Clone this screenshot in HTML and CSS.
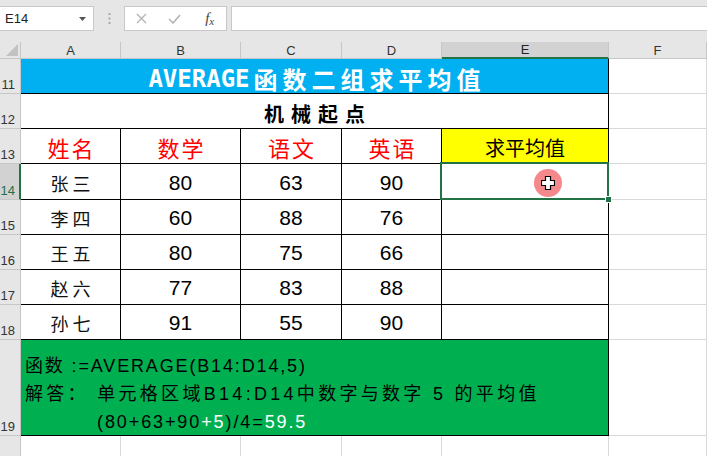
FILE: index.html
```html
<!DOCTYPE html>
<html lang="zh-CN">
<head>
<meta charset="utf-8">
<title>AVERAGE</title>
<link rel="stylesheet" href="styles.css">
</head>
<body>
<div class="toolbar">
  <div class="namebox"><span>E14</span>
    <svg class="caret" width="7" height="4" viewBox="0 0 7 4"><path d="M0 0h7L3.5 4z" fill="#555"/></svg>
  </div>
  <div class="grip">
    <svg width="3" height="11" viewBox="0 0 3 11"><rect x="0.5" y="0" width="2" height="2" fill="#a8a8a8"/><rect x="0.5" y="4.5" width="2" height="2" fill="#a8a8a8"/><rect x="0.5" y="9" width="2" height="2" fill="#a8a8a8"/></svg>
  </div>
  <div class="fbox">
    <span class="fbtn"><svg width="11" height="11" viewBox="0 0 11 11"><path d="M1 1l9 9M10 1l-9 9" stroke="#b4b4b4" stroke-width="1.4" fill="none"/></svg></span>
    <span class="fbtn"><svg width="13" height="10" viewBox="0 0 13 10"><path d="M1 5l4 4 7-8" stroke="#b4b4b4" stroke-width="1.6" fill="none"/></svg></span>
    <span class="fbtn fx">f<span class="fxsub">x</span></span>
  </div>
  <div class="finput"></div>
</div>

<div class="sheet">
  <div class="corner"><svg width="12" height="12" viewBox="0 0 12 12"><path d="M12 0v12H0z" fill="#c2c2c2"/></svg></div>
  <div class="colh">A</div>
  <div class="colh">B</div>
  <div class="colh">C</div>
  <div class="colh">D</div>
  <div class="colh colh-sel">E</div>
  <div class="colh">F</div>

  <div class="rowh">11</div>
  <div class="title"><span class="title-lat">AVERAGE</span><span class="title-cjk">函数二组求平均值</span></div>
  <div class="cell"></div>

  <div class="rowh">12</div>
  <div class="subtitle">机械起点</div>
  <div class="cell"></div>

  <div class="rowh">13</div>
  <div class="t head">姓名</div>
  <div class="t head">数学</div>
  <div class="t head">语文</div>
  <div class="t head">英语</div>
  <div class="t head-avg">求平均值</div>
  <div class="cell"></div>

  <div class="rowh rowh-sel">14</div>
  <div class="t name">张三</div>
  <div class="t num">80</div>
  <div class="t num">63</div>
  <div class="t num">90</div>
  <div class="t sel"><span class="handle"></span><span class="cursor"><svg width="14" height="14" viewBox="0 0 14 14"><path d="M4.5 0.5h5v4h4v5h-4v4h-5v-4h-4v-5h4z" fill="#fff" stroke="#000" stroke-width="1.2"/></svg></span></div>
  <div class="cell"></div>

  <div class="rowh">15</div>
  <div class="t name">李四</div>
  <div class="t num">60</div>
  <div class="t num">88</div>
  <div class="t num">76</div>
  <div class="t"></div>
  <div class="cell"></div>

  <div class="rowh">16</div>
  <div class="t name">王五</div>
  <div class="t num">80</div>
  <div class="t num">75</div>
  <div class="t num">66</div>
  <div class="t"></div>
  <div class="cell"></div>

  <div class="rowh">17</div>
  <div class="t name">赵六</div>
  <div class="t num">77</div>
  <div class="t num">83</div>
  <div class="t num">88</div>
  <div class="t"></div>
  <div class="cell"></div>

  <div class="rowh">18</div>
  <div class="t name">孙七</div>
  <div class="t num">91</div>
  <div class="t num">55</div>
  <div class="t num">90</div>
  <div class="t"></div>
  <div class="cell"></div>

  <div class="rowh">19</div>
  <div class="note">
    <div class="note-line l1">函数 :=AVERAGE(B14:D14,5)</div>
    <div class="note-line l2">解答： 单元格区域B14:D14中数字与数字 5 的平均值</div>
    <div class="note-line l3">(80+63+90<span class="hl">+5</span>)/4=<span class="hl">59.5</span></div>
  </div>
  <div class="cell"></div>

  <div class="rowh"></div>
  <div class="cell"></div>
  <div class="cell"></div>
  <div class="cell"></div>
  <div class="cell"></div>
  <div class="cell"></div>
  <div class="cell"></div>
</div>
</body>
</html>
```

FILE: styles.css
```css
html, body {
  margin: 0;
  padding: 0;
}
body {
  width: 707px;
  height: 456px;
  overflow: hidden;
  background: #fff;
  font-family: "Liberation Sans", "Noto Sans CJK SC", sans-serif;
}

/* ---------- formula bar ---------- */
.toolbar {
  height: 42px;
  box-sizing: border-box;
  background: #e6e6e6;
  display: flex;
  align-items: flex-start;
  padding-top: 6px;
}
.namebox {
  width: 94px;
  height: 25px;
  box-sizing: border-box;
  background: #fff;
  border: 1px solid #c8c8c8;
  border-left: none;
  display: flex;
  align-items: center;
  justify-content: space-between;
  padding: 0 7px 0 5px;
  font-size: 13px;
  color: #222;
}
.grip {
  width: 30px;
  height: 25px;
  display: flex;
  align-items: center;
  justify-content: center;
}
.fbox {
  width: 103px;
  height: 25px;
  box-sizing: border-box;
  background: #fff;
  border: 1px solid #c8c8c8;
  display: flex;
  align-items: center;
}
.fbtn {
  width: 34px;
  display: flex;
  justify-content: center;
  align-items: center;
}
.fx {
  font-family: "Liberation Serif", serif;
  font-style: italic;
  font-size: 15px;
  color: #444;
  padding-left: 3px;
}
.fxsub {
  font-size: 11px;
  position: relative;
  top: 2px;
}
.finput {
  flex: 1;
  height: 25px;
  margin-left: 4px;
  box-sizing: border-box;
  background: #fff;
  border: 1px solid #c8c8c8;
  border-right: none;
}

/* ---------- sheet ---------- */
.sheet {
  display: grid;
  grid-template-columns: 21px 100px 120px 101px 100px 167px 98px;
  grid-template-rows: 17px 35px 35px 35px 36px 35px 35px 35px 35px 96px 35px;
}
.sheet > div {
  box-sizing: border-box;
  min-width: 0;
}
.corner {
  background: #e6e6e6;
  border-right: 1px solid #c6c6c6;
  border-bottom: 1px solid #c6c6c6;
  display: flex;
  align-items: flex-end;
  justify-content: flex-end;
  padding: 0 2px 2px 0;
}
.colh {
  background: #e6e6e6;
  border-right: 1px solid #c6c6c6;
  border-bottom: 1px solid #c6c6c6;
  font-size: 13px;
  color: #333;
  display: flex;
  align-items: center;
  justify-content: center;
}
.colh-sel {
  background: #d2d2d2;
  border-bottom: 2px solid #217346;
  color: #222;
}
.rowh {
  background: #e6e6e6;
  border-right: 1px solid #c6c6c6;
  border-bottom: 1px solid #c6c6c6;
  font-size: 13px;
  color: #333;
  display: flex;
  align-items: flex-end;
  justify-content: flex-end;
  padding: 0 5px 1px 0;
  white-space: nowrap;
}
.rowh-sel {
  background: #d2d2d2;
  border-right: 2px solid #217346;
  color: #217346;
  padding-right: 4px;
}
.cell {
  border-right: 1px solid #d9d9d9;
  border-bottom: 1px solid #d9d9d9;
}

.title {
  grid-column: span 5;
  background: #00b0f0;
  border-right: 1px solid #000;
  border-bottom: 1px solid #000;
  color: #fff;
  display: flex;
  align-items: center;
  justify-content: center;
  padding-top: 5px;
  font-weight: bold;
  white-space: nowrap;
}
.title-lat {
  font-family: "DejaVu Sans Mono", monospace;
  font-size: 24px;
}
.title-cjk {
  font-family: "Noto Sans CJK SC", sans-serif;
  font-size: 24px;
  letter-spacing: 5px;
  margin-left: 4px;
  margin-right: -5px;
}
.subtitle {
  grid-column: span 5;
  border-right: 1px solid #000;
  border-bottom: 1px solid #000;
  font-family: "Noto Sans CJK SC", sans-serif;
  font-weight: bold;
  font-size: 20px;
  letter-spacing: 7px;
  padding-left: 7px;
  display: flex;
  align-items: center;
  justify-content: center;
  padding-top: 4px;
  color: #000;
}

.t {
  border-right: 1px solid #000;
  border-bottom: 1px solid #000;
  display: flex;
  align-items: center;
  justify-content: center;
}
.head {
  color: #ff0000;
  font-family: "Noto Sans CJK SC", sans-serif;
  font-size: 22px;
  letter-spacing: 2px;
  padding-left: 2px;
  padding-top: 2px;
}
.head-avg {
  background: #ffff00;
  border-right: 1px solid #000;
  border-bottom: 1px solid #000;
  font-family: "Noto Sans CJK SC", sans-serif;
  font-size: 20px;
  color: #000;
  display: flex;
  align-items: center;
  justify-content: center;
  padding-top: 2px;
}
.name {
  font-family: "Noto Sans CJK SC", sans-serif;
  font-size: 18px;
  letter-spacing: 4px;
  padding-left: 4px;
  padding-top: 2px;
  color: #111;
}
.num {
  font-family: "Liberation Sans", sans-serif;
  font-size: 21px;
  color: #000;
  padding-top: 2px;
}

.sel {
  position: relative;
}
.sel::before {
  content: "";
  position: absolute;
  left: -2px;
  top: -2px;
  right: -1px;
  bottom: -1px;
  border: 2px solid #217346;
}
.handle {
  position: absolute;
  right: -4px;
  bottom: -4px;
  width: 5px;
  height: 5px;
  background: #217346;
  border: 1px solid #fff;
}
.cursor {
  position: absolute;
  left: 92px;
  top: 5px;
  width: 28px;
  height: 28px;
  border-radius: 50%;
  background: #f4888b;
  display: flex;
  align-items: center;
  justify-content: center;
}

.note {
  grid-column: span 5;
  background: #00b050;
  border-right: 1px solid #000;
  border-bottom: 1px solid #000;
  display: flex;
  flex-direction: column;
  justify-content: flex-start;
  padding: 12px 0 0 4px;
  font-size: 18px;
  line-height: 28px;
  color: #000;
  white-space: nowrap;
}
.l1 {
  letter-spacing: 1.85px;
}
.l2 {
  letter-spacing: 3.3px;
}
.l3 {
  letter-spacing: 1.9px;
  padding-left: 72px;
}
.hl {
  color: #fff;
}
```
